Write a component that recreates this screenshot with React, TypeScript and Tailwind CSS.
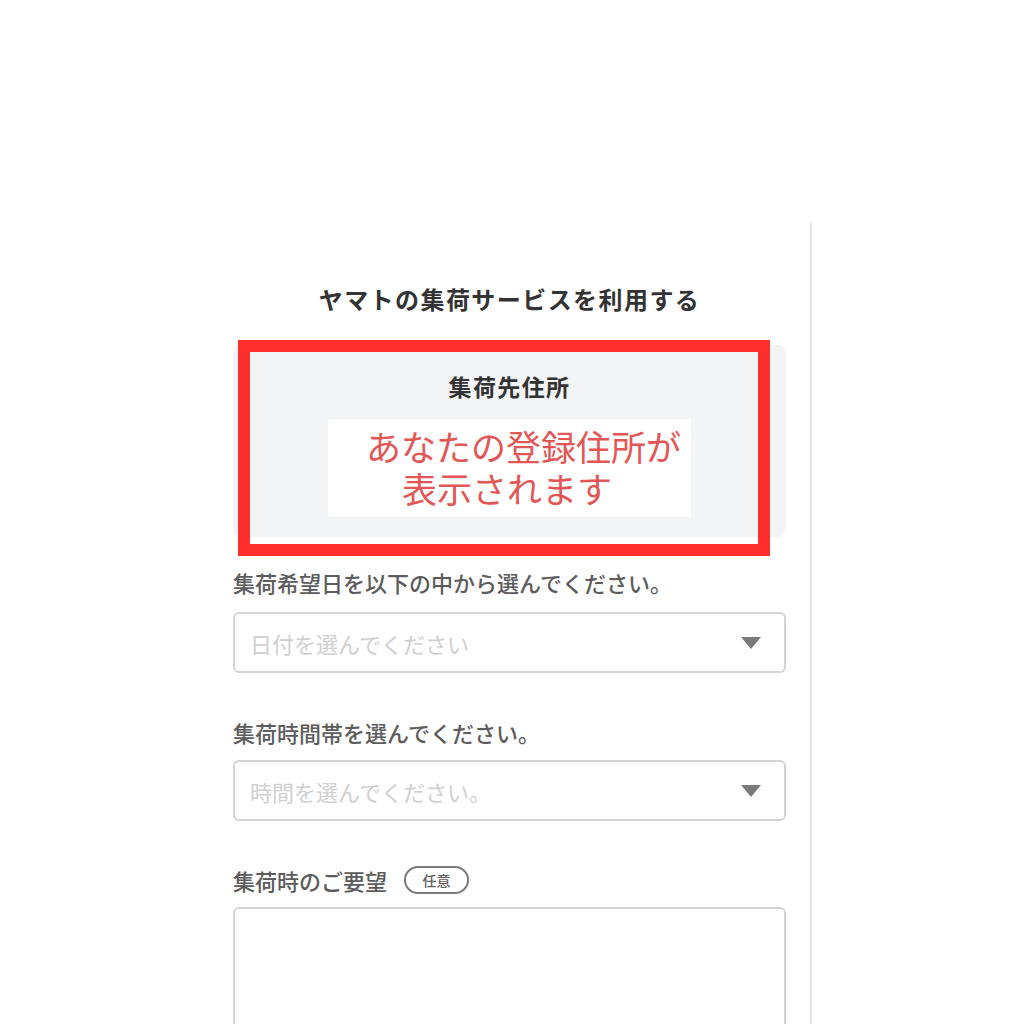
const font = { fontFamily: '"Noto Sans CJK JP", "Noto Sans", sans-serif' };

function SelectBox({ placeholder }: { placeholder: string }) {
  return (
    <div className="flex h-[61px] items-center justify-between rounded-[6px] border-2 border-[#d4d4d4] bg-white pl-[15px] pr-[22px]">
      <span className="text-[22px] leading-none text-[#cfcfcf]">{placeholder}</span>
      <svg width="22" height="14" viewBox="0 0 22 14">
        <path d="M1 1 L21 1 L11 13 Z" fill="#7a7a7a" />
      </svg>
    </div>
  );
}

export default function App() {
  return (
    <div className="min-h-screen w-full bg-white" style={font}>
      <div className="ml-[222px] mt-[222px] w-[590px] border-r-2 border-[#e8e8e8] pb-10 pl-[11px] pr-[24px]">
        {/* Title */}
        <h1 className="pt-[61px] text-center text-[24px] font-bold leading-[32px] tracking-[0.06em] text-[#333]">
          ヤマトの集荷サービスを利用する
        </h1>

        {/* Address card */}
        <div className="relative mt-[30px] h-[192px] rounded-[8px] bg-[#f3f4f6] pt-[27px]">
          <p className="text-center text-[23px] font-bold leading-[28px] tracking-[0.06em] text-[#333]">
            集荷先住所
          </p>
          <div className="mx-auto mt-[19px] flex h-[98px] w-[363px] flex-col bg-white pt-[6px] text-[35px] leading-[42px] text-[#e35656]">
            <span className="whitespace-nowrap pl-[38px]">あなたの登録住所が</span>
            <span className="whitespace-nowrap pl-[74px]">表示されます</span>
          </div>
          {/* annotation frame */}
          <div className="pointer-events-none absolute left-[5px] top-[-5px] h-[216px] w-[532px] border-[12px] border-[#ff2e2e]" />
        </div>

        {/* Date */}
        <p className="mt-[33px] text-[22px] font-medium leading-[24px] text-[#5c5c5c]">
          集荷希望日を以下の中から選んでください。
        </p>
        <div className="mt-[18px]">
          <SelectBox placeholder="日付を選んでください" />
        </div>

        {/* Time */}
        <p className="mt-[47px] text-[22px] font-medium leading-[24px] text-[#5c5c5c]">
          集荷時間帯を選んでください。
        </p>
        <div className="mt-[16px]">
          <SelectBox placeholder="時間を選んでください。" />
        </div>

        {/* Request */}
        <div className="mt-[45px] flex items-center gap-[17px]">
          <span className="text-[22px] font-medium leading-[24px] text-[#5c5c5c]">集荷時のご要望</span>
          <span className="flex h-[28px] w-[65px] items-center justify-center rounded-full border-2 border-[#7a7a7a] text-[14px] font-medium text-[#5c5c5c]">
            任意
          </span>
        </div>
        <div className="mt-[13px] h-[160px] rounded-[6px] border-2 border-[#d4d4d4] bg-white" />
      </div>
    </div>
  );
}
